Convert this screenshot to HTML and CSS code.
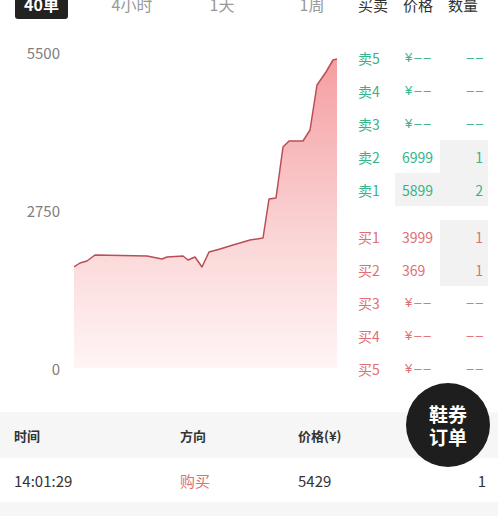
FILE: index.html
```html
<!DOCTYPE html>
<html lang="zh-CN">
<head>
    <meta charset="UTF-8">
    <meta name="viewport" content="width=device-width, initial-scale=1.0">
    <title>鞋券行情</title>
    <link rel="stylesheet" href="styles.css">
</head>
<body>
    <!-- Period tabs + order book header -->
    <div class="topbar">
        <div class="tabs">
            <div class="tab tab-first"><span class="pill">40单</span></div>
            <div class="tab">4小时</div>
            <div class="tab">1天</div>
            <div class="tab">1周</div>
        </div>
        <div class="book-head">
            <span>买卖</span>
            <span>价格</span>
            <span>数量</span>
        </div>
    </div>

    <div class="main">
        <!-- Price chart -->
        <div class="chart">
            <div class="axis">
                <span>5500</span>
                <span>2750</span>
                <span>0</span>
            </div>
            <svg class="plot" width="263" height="340" viewBox="74 41 263 340">
                <defs>
                    <linearGradient id="fill" x1="0" y1="59" x2="0" y2="368" gradientUnits="userSpaceOnUse">
                        <stop offset="0" stop-color="#f59ea1"/>
                        <stop offset="0.6" stop-color="#fbd7d8"/>
                        <stop offset="1" stop-color="#fff5f5"/>
                    </linearGradient>
                </defs>
                <path fill="url(#fill)" d="M74 267 L80 263 L87 261 L95 255 L147 256 L162 259 L167 257 L183 256 L188 260 L195 257 L202 267 L209 252 L220 249 L233 245 L250 240 L263 238 L269 199 L276 198 L283 147 L289 141 L303 141 L310 130 L317 85 L326 72 L333 60 L337 59 L337 368 L74 368 Z"/>
                <polyline fill="none" stroke="#b94f56" stroke-width="1.5" stroke-linejoin="round" points="74,267 80,263 87,261 95,255 147,256 162,259 167,257 183,256 188,260 195,257 202,267 209,252 220,249 233,245 250,240 263,238 269,199 276,198 283,147 289,141 303,141 310,130 317,85 326,72 333,60 337,59"/>
            </svg>
        </div>

        <!-- Order book -->
        <div class="book">
            <div class="side">
                <div class="row sell"><span class="lbl">卖5</span><span class="price empty">¥––</span><span class="qty empty">––</span></div>
                <div class="row sell"><span class="lbl">卖4</span><span class="price empty">¥––</span><span class="qty empty">––</span></div>
                <div class="row sell"><span class="lbl">卖3</span><span class="price empty">¥––</span><span class="qty empty">––</span></div>
                <div class="row sell"><span class="lbl">卖2</span><span class="price">6999</span><span class="qty hl">1</span></div>
                <div class="row sell"><span class="lbl">卖1</span><span class="price hl">5899</span><span class="qty hl">2</span></div>
            </div>
            <div class="side">
                <div class="row buy"><span class="lbl">买1</span><span class="price">3999</span><span class="qty hl">1</span></div>
                <div class="row buy"><span class="lbl">买2</span><span class="price">369</span><span class="qty hl">1</span></div>
                <div class="row buy"><span class="lbl">买3</span><span class="price empty">¥––</span><span class="qty empty">––</span></div>
                <div class="row buy"><span class="lbl">买4</span><span class="price empty">¥––</span><span class="qty empty">––</span></div>
                <div class="row buy"><span class="lbl">买5</span><span class="price empty">¥––</span><span class="qty empty">––</span></div>
            </div>
        </div>
    </div>

    <!-- Trade history -->
    <table class="trades">
        <thead>
            <tr>
                <th>时间</th>
                <th>方向</th>
                <th>价格(¥)</th>
                <th class="num">数量</th>
            </tr>
        </thead>
        <tbody>
            <tr>
                <td>14:01:29</td>
                <td class="dir-buy">购买</td>
                <td>5429</td>
                <td class="num">1</td>
            </tr>
            <tr class="alt">
                <td></td><td></td><td></td><td></td>
            </tr>
        </tbody>
    </table>

    <div class="fab">鞋券<br>订单</div>
</body>
</html>
```

FILE: styles.css
```css
body {
    margin: 0;
    width: 498px;
    height: 516px;
    overflow: hidden;
    position: relative;
    background: #fff;
    font-family: "Noto Sans CJK SC", "Noto Sans", sans-serif;
    color: #333;
}

/* top bar */
.topbar {
    display: flex;
    align-items: center;
    height: 30px;
    margin-top: -11px;
}

.tabs {
    display: flex;
    align-items: center;
}

.tab {
    width: 90px;
    text-align: center;
    font-size: 16px;
    color: #999;
}

.tab-first {
    width: 87px;
    text-align: left;
}

.pill {
    display: inline-block;
    margin-left: 15px;
    width: 53px;
    height: 30px;
    line-height: 30px;
    text-align: center;
    background-color: #222;
    color: #fff;
    font-weight: bold;
    border-radius: 3px;
}

.book-head {
    display: flex;
    gap: 15px;
    margin-left: 1px;
    font-size: 15px;
    color: #333;
}

/* chart + book */
.main {
    display: flex;
    margin-top: 22px;
}

.chart {
    display: flex;
    width: 345px;
    height: 340px;
}

.axis {
    width: 60px;
    padding: 4px 14px 4px 0;
    display: flex;
    flex-direction: column;
    justify-content: space-between;
    align-items: flex-end;
    font-size: 15px;
    line-height: 16px;
    color: #808080;
}

.plot {
    display: block;
}

.book {
    width: 153px;
    display: flex;
    flex-direction: column;
    gap: 14px;
}

.row {
    display: flex;
    align-items: stretch;
    height: 33px;
    font-size: 14px;
}

.row span {
    display: flex;
    align-items: center;
}

.lbl {
    width: 37px;
    padding-left: 13px;
}

.price {
    width: 38px;
    padding-left: 7px;
}

.qty {
    width: 43px;
    padding-right: 5px;
    justify-content: flex-end;
}

.price.empty {
    width: 35px;
    padding-left: 10px;
    letter-spacing: 2px;
    font-family: "Liberation Sans", sans-serif;
    font-size: 13px;
}

.qty.empty {
    letter-spacing: 2px;
    padding-right: 3px;
    width: 45px;
    font-family: "Liberation Sans", sans-serif;
    font-size: 13px;
}

.hl {
    background-color: #f2f2f2;
}

.sell {
    color: #36b38a;
}

.buy {
    color: #de7074;
}

/* trades table */
.trades {
    width: 100%;
    margin-top: 27px;
    border-collapse: collapse;
}

.trades th {
    height: 46px;
    padding: 0 0 0 14px;
    background-color: #f6f6f6;
    font-size: 13px;
    font-weight: bold;
    text-align: left;
    color: #333;
}

.trades td {
    height: 44px;
    padding: 0 0 0 14px;
    font-size: 15px;
    color: #333;
}

.trades th:nth-child(1), .trades td:nth-child(1) { width: 152px; }
.trades th:nth-child(2), .trades td:nth-child(2) { width: 104px; }
.trades th:nth-child(3), .trades td:nth-child(3) { width: 120px; }

.trades .num {
    text-align: right;
    padding-right: 12px;
}

.trades .alt td {
    background-color: #f6f6f6;
}

.dir-buy {
    color: #de7074 !important;
}

/* floating order button */
.fab {
    position: absolute;
    left: 406px;
    top: 383px;
    width: 84px;
    height: 84px;
    border-radius: 50%;
    background-color: #1e1e1e;
    color: #fff;
    font-size: 19px;
    font-weight: bold;
    line-height: 23px;
    display: flex;
    align-items: center;
    justify-content: center;
    text-align: center;
}
```
